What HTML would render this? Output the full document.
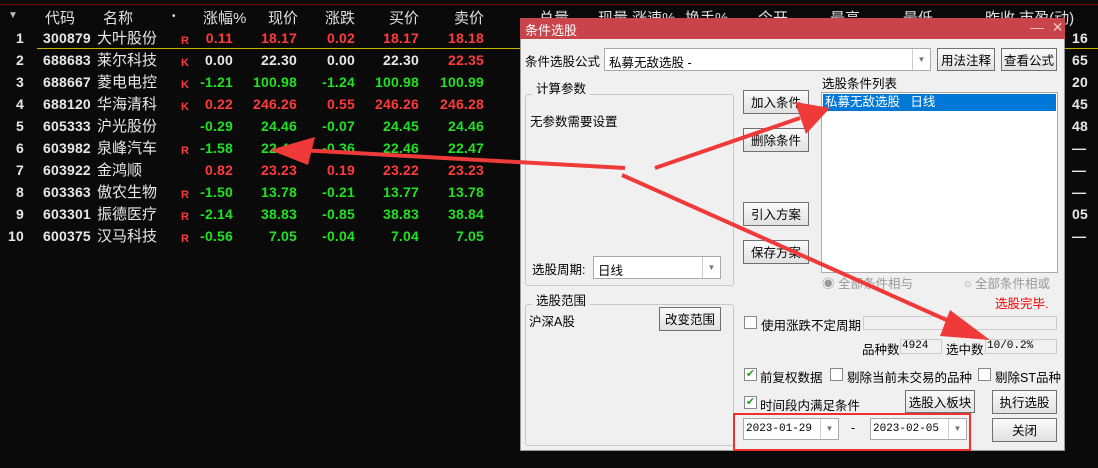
<!DOCTYPE html>
<html><head><meta charset="utf-8"><style>
*{margin:0;padding:0;box-sizing:border-box}
body{width:1098px;height:468px;background:#0a0a0a;position:relative;overflow:hidden;font-family:"Liberation Sans","Noto Sans CJK SC",sans-serif;}
.a{position:absolute;white-space:nowrap}
.h{color:#e0e0e0;font-size:15px;top:7px}
.r{font-size:14px;font-weight:bold;font-family:"Liberation Sans",sans-serif;letter-spacing:0.2px}
.w{color:#e8e8e8}.rd{color:#ff3b3b}.g{color:#22e022}
.nm{color:#e8e8e8;font-size:15px;font-family:"Noto Sans CJK SC",sans-serif}
.d{font-size:12.5px;color:#000;font-family:"Liberation Sans","Noto Sans CJK SC",sans-serif}
.btn{position:absolute;background:linear-gradient(#fafafa,#e1e1e1);border:1px solid #707070;font-size:12.5px;text-align:center;line-height:22px;color:#000;font-family:"Noto Sans CJK SC",sans-serif}
.box{position:absolute;background:#fff;border:1px solid #aaa}
.grp{position:absolute;border:1px solid #c8c8c8;border-radius:3px}
.cb{position:absolute;width:13px;height:13px;border:1px solid #888;background:#fff;font-size:11px;line-height:11px;color:#2a9a2a;text-align:center}
.dd{position:absolute;top:0;right:0;width:18px;height:100%;border-left:1px solid #ccc;color:#777;font-size:8px;text-align:center}
</style></head><body>
<div class="a" style="left:0;top:0;width:1098px;height:5px;border-bottom:1px solid #700;"></div>
<div class="a h" style="left:8px;font-size:10px;top:10px;color:#bbb">▼</div>
<div class="a h" style="left:45px">代码</div>
<div class="a h" style="left:103px">名称</div>
<div class="a h" style="left:172px;font-size:10px;top:11px">•</div>
<div class="a h" style="left:203px">涨幅%</div>
<div class="a h" style="left:268px">现价</div>
<div class="a h" style="left:325px">涨跌</div>
<div class="a h" style="left:389px">买价</div>
<div class="a h" style="left:454px">卖价</div>
<div class="a h" style="left:539px">总量</div>
<div class="a h" style="left:598px">现量 涨速%</div>
<div class="a h" style="left:685px">换手%</div>
<div class="a h" style="left:758px">今开</div>
<div class="a h" style="left:830px">最高</div>
<div class="a h" style="left:903px">最低</div>
<div class="a h" style="left:985px">昨收 市盈(动)</div>
<div class="a" style="left:37px;top:48px;width:1061px;height:1px;background:#c8b400"></div>
<div id="rows"></div>
<script>
var d=[["1","300879","大叶股份","R","0.11","18.17","0.02","18.17","18.18","r","rd","rd","rd","rd","rd","16"],
["2","688683","莱尔科技","K","0.00","22.30","0.00","22.30","22.35","w","w","w","w","w","rd","65"],
["3","688667","菱电电控","K","-1.21","100.98","-1.24","100.98","100.99","g","g","g","g","g","g","20"],
["4","688120","华海清科","K","0.22","246.26","0.55","246.26","246.28","rd","rd","rd","rd","rd","rd","45"],
["5","605333","沪光股份","","-0.29","24.46","-0.07","24.45","24.46","g","g","g","g","g","g","48"],
["6","603982","泉峰汽车","R","-1.58","22.43","-0.36","22.46","22.47","g","g","g","g","g","g","—"],
["7","603922","金鸿顺","","0.82","23.23","0.19","23.22","23.23","rd","rd","rd","rd","rd","rd","—"],
["8","603363","傲农生物","R","-1.50","13.78","-0.21","13.77","13.78","g","g","g","g","g","g","—"],
["9","603301","振德医疗","R","-2.14","38.83","-0.85","38.83","38.84","g","g","g","g","g","g","05"],
["10","600375","汉马科技","R","-0.56","7.05","-0.04","7.04","7.05","g","g","g","g","g","g","—"]];
var h="";var rc=[233,297,355,419,484];
d.forEach(function(r,i){var t=30+i*22;
h+='<div class="a r w" style="right:'+(1098-24)+'px;top:'+t+'px">'+r[0]+'</div>';
h+='<div class="a r w" style="left:43px;top:'+t+'px">'+r[1]+'</div>';
h+='<div class="a nm" style="left:97px;top:'+(t-3)+'px">'+r[2]+'</div>';
h+='<div class="a" style="left:181px;top:'+(t+5)+'px;color:#ff3b3b;font-size:11px;font-weight:bold">'+r[3]+'</div>';
for(var k=0;k<5;k++){h+='<div class="a r '+r[10+k]+'" style="right:'+(1098-rc[k])+'px;top:'+t+'px">'+r[4+k]+'</div>';}
h+='<div class="a r w" style="left:1072px;top:'+t+'px">'+r[15]+'</div>';});
document.getElementById('rows').innerHTML=h;
</script>
<!-- dialog -->
<div class="a" style="left:520px;top:18px;width:545px;height:433px;background:#f0f0f0;border:1px solid #999;border-top:none"></div>
<div class="a" style="left:520px;top:18px;width:545px;height:21px;background:#c8444a"></div>
<div class="a" style="left:525px;top:20px;color:#fff;font-size:13px;font-family:'Noto Sans CJK SC'">条件选股</div>
<div class="a" style="left:1030px;top:19px;color:#f4c4c4;font-size:14px">—&nbsp; ✕</div>
<div class="a d" style="left:525px;top:51px">条件选股公式</div>
<div class="box" style="left:604px;top:48px;width:327px;height:23px"><span class="a d" style="left:4px;top:3px">私募无敌选股 -</span><div class="dd" style="line-height:21px">▼</div></div>
<div class="btn" style="left:937px;top:48px;width:58px;height:23px">用法注释</div>
<div class="btn" style="left:1001px;top:48px;width:56px;height:23px">查看公式</div>
<div class="grp" style="left:525px;top:94px;width:209px;height:192px"></div>
<div class="a d" style="left:532px;top:78px;background:#f0f0f0;padding:0 4px">计算参数</div>
<div class="a d" style="left:530px;top:111px">无参数需要设置</div>
<div class="a d" style="left:532px;top:259px">选股周期:</div>
<div class="box" style="left:593px;top:256px;width:128px;height:23px"><span class="a d" style="left:4px;top:3px">日线</span><div class="dd" style="line-height:21px">▼</div></div>
<div class="grp" style="left:525px;top:304px;width:209px;height:142px"></div>
<div class="a d" style="left:532px;top:290px;background:#f0f0f0;padding:0 4px">选股范围</div>
<div class="a d" style="left:529px;top:311px">沪深A股</div>
<div class="btn" style="left:659px;top:307px;width:62px;height:24px">改变范围</div>
<div class="btn" style="left:743px;top:90px;width:66px;height:24px">加入条件</div>
<div class="btn" style="left:743px;top:128px;width:66px;height:24px">删除条件</div>
<div class="btn" style="left:743px;top:202px;width:66px;height:24px">引入方案</div>
<div class="btn" style="left:743px;top:240px;width:66px;height:24px">保存方案</div>
<div class="a d" style="left:822px;top:73px">选股条件列表</div>
<div class="box" style="left:821px;top:92px;width:237px;height:181px"></div>
<div class="a" style="left:823px;top:94px;width:233px;height:17px;background:#0078d7;color:#fff;font-size:12.5px;padding-left:2px;line-height:16px">私募无敌选股&nbsp;&nbsp;&nbsp;日线</div>
<div class="a d" style="left:822px;top:273px;color:#999">◉ 全部条件相与</div>
<div class="a d" style="left:964px;top:273px;color:#999">○ 全部条件相或</div>
<div class="a d" style="left:995px;top:293px;color:#f00">选股完毕.</div>
<div class="cb" style="left:744px;top:316px"></div>
<div class="a d" style="left:761px;top:315px">使用涨跌不定周期</div>
<div class="a" style="left:863px;top:316px;width:194px;height:14px;border:1px solid #ccc;background:#f0f0f0"></div>
<div class="a d" style="left:862px;top:339px">品种数</div>
<div class="a" style="left:900px;top:339px;width:42px;height:15px;border:1px solid #ccc;font-size:11px;font-family:'Liberation Mono';padding-left:1px">4924</div>
<div class="a d" style="left:946px;top:339px">选中数</div>
<div class="a" style="left:985px;top:339px;width:72px;height:15px;border:1px solid #ccc;font-size:11px;font-family:'Liberation Mono';padding-left:1px">10/0.2%</div>
<div class="cb" style="left:744px;top:368px">✔</div><div class="a d" style="left:760px;top:367px">前复权数据</div>
<div class="cb" style="left:830px;top:368px"></div><div class="a d" style="left:847px;top:367px">剔除当前未交易的品种</div>
<div class="cb" style="left:978px;top:368px"></div><div class="a d" style="left:995px;top:367px">剔除ST品种</div>
<div class="cb" style="left:744px;top:396px">✔</div><div class="a d" style="left:760px;top:395px">时间段内满足条件</div>
<div class="btn" style="left:905px;top:390px;width:70px;height:23px">选股入板块</div>
<div class="btn" style="left:992px;top:390px;width:65px;height:24px">执行选股</div>
<div class="btn" style="left:992px;top:418px;width:65px;height:24px">关闭</div>
<div class="a" style="left:733px;top:413px;width:238px;height:38px;border:2px solid #f03030"></div>
<div class="box" style="left:743px;top:418px;width:96px;height:22px"><span class="a" style="left:2px;top:4px;font-size:11px;font-family:'Liberation Mono'">2023-01-29</span><div class="dd" style="line-height:20px">▼</div></div>
<div class="a d" style="left:851px;top:421px">-</div>
<div class="box" style="left:870px;top:418px;width:97px;height:22px"><span class="a" style="left:2px;top:4px;font-size:11px;font-family:'Liberation Mono'">2023-02-05</span><div class="dd" style="line-height:20px">▼</div></div>
<svg class="a" style="left:0;top:0" width="1098" height="468">
<g fill="#f03a3a" stroke="#f03a3a">
<line x1="625" y1="168" x2="300" y2="150" stroke-width="4"/>
<polygon points="270,150 315,137 308,165" stroke="none"/>
<line x1="655" y1="168" x2="800" y2="118" stroke-width="4"/>
<polygon points="830,108 795,102 806,134" stroke="none"/>
<line x1="622" y1="175" x2="960" y2="326" stroke-width="4"/>
<polygon points="990,340 950,310 940,336" stroke="none"/>
</g></svg>
</body></html>
